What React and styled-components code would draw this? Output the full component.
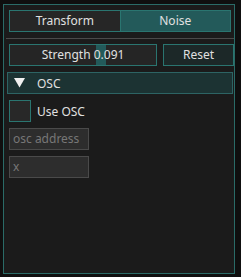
import React from "react";
import styled, { createGlobalStyle } from "styled-components";

const Global = createGlobalStyle`
  html, body { margin: 0; padding: 0; background: #0f0f0f; }
  body { font-family: "Noto Sans", "Open Sans", sans-serif; font-size: 12px; color: #e0e0e0; }
  * { box-sizing: border-box; }
`;

const Panel = styled.div`
  margin: 4px 0 0 3px;
  width: 232px;
  height: 270px;
  border: 1px solid #2a6b67;
  background: #1b1b1b;
  padding: 5px 3px 0 5px;
  display: flex;
  flex-direction: column;
  align-items: flex-start;
`;

const TabBar = styled.div`
  display: flex;
  width: 222px;
  height: 22px;
`;

const Tab = styled.div`
  flex: 1;
  display: flex;
  align-items: center;
  justify-content: center;
  border: 1px solid #2a7570;
  background: ${(p) => (p.$active ? "#235a5a" : "#262626")};
  line-height: 1;
  & + & { border-left: none; }
`;

const Separator = styled.div`
  width: 228px;
  height: 1px;
  margin: 6px 0 5px -3px;
  background: #4a4a4a;
`;

const Row = styled.div`
  display: flex;
  gap: ${(p) => p.$gap || 6}px;
  align-items: center;
  height: 22px;
  margin-bottom: 6px;
`;

const Frame = styled.div`
  position: relative;
  width: ${(p) => p.$w}px;
  height: 22px;
  display: flex;
  align-items: center;
  justify-content: center;
  border: 1px solid #2a7570;
  background: ${(p) => p.$bg || "#252525"};
  line-height: 1;
`;

const Grab = styled.div`
  position: absolute;
  top: 0;
  bottom: 0;
  width: 10px;
  background: #235a5a;
`;

const Label = styled.span`
  position: relative;
`;

const Header = styled.div`
  width: 226px;
  height: 22px;
  margin: 0 0 6px -2px;
  display: flex;
  align-items: center;
  border: 1px solid #2d6464;
  background: #1c3333;
`;

const Arrow = styled.svg`
  margin-left: 6px;
  margin-right: 12px;
`;

const Check = styled.div`
  width: 22px;
  height: 22px;
  border: 1px solid #2a7570;
  background: #282828;
`;

const Input = styled.div`
  width: 80px;
  height: 22px;
  margin-bottom: 6px;
  border: 1px solid #4a4a4a;
  background: #2d2d2d;
  color: #777;
  display: flex;
  align-items: center;
  padding-left: 3px;
  line-height: 1;
`;

export default function App() {
  return (
    <>
      <Global />
      <Panel>
        <TabBar>
          <Tab>Transform</Tab>
          <Tab $active>Noise</Tab>
        </TabBar>
        <Separator />
        <Row $gap={6}>
          <Frame $w={148}>
            <Grab style={{ left: 86 }} />
            <Label>Strength 0.091</Label>
          </Frame>
          <Frame $w={71} $bg="#1c2828">Reset</Frame>
        </Row>
        <Header>
          <Arrow width="11" height="10" viewBox="0 0 11 10">
            <polygon points="0,0 11,0 5.5,9.5" fill="#f0f0f0" />
          </Arrow>
          OSC
        </Header>
        <Row $gap={6}>
          <Check />
          <span>Use OSC</span>
        </Row>
        <Input>osc address</Input>
        <Input>x</Input>
      </Panel>
    </>
  );
}
